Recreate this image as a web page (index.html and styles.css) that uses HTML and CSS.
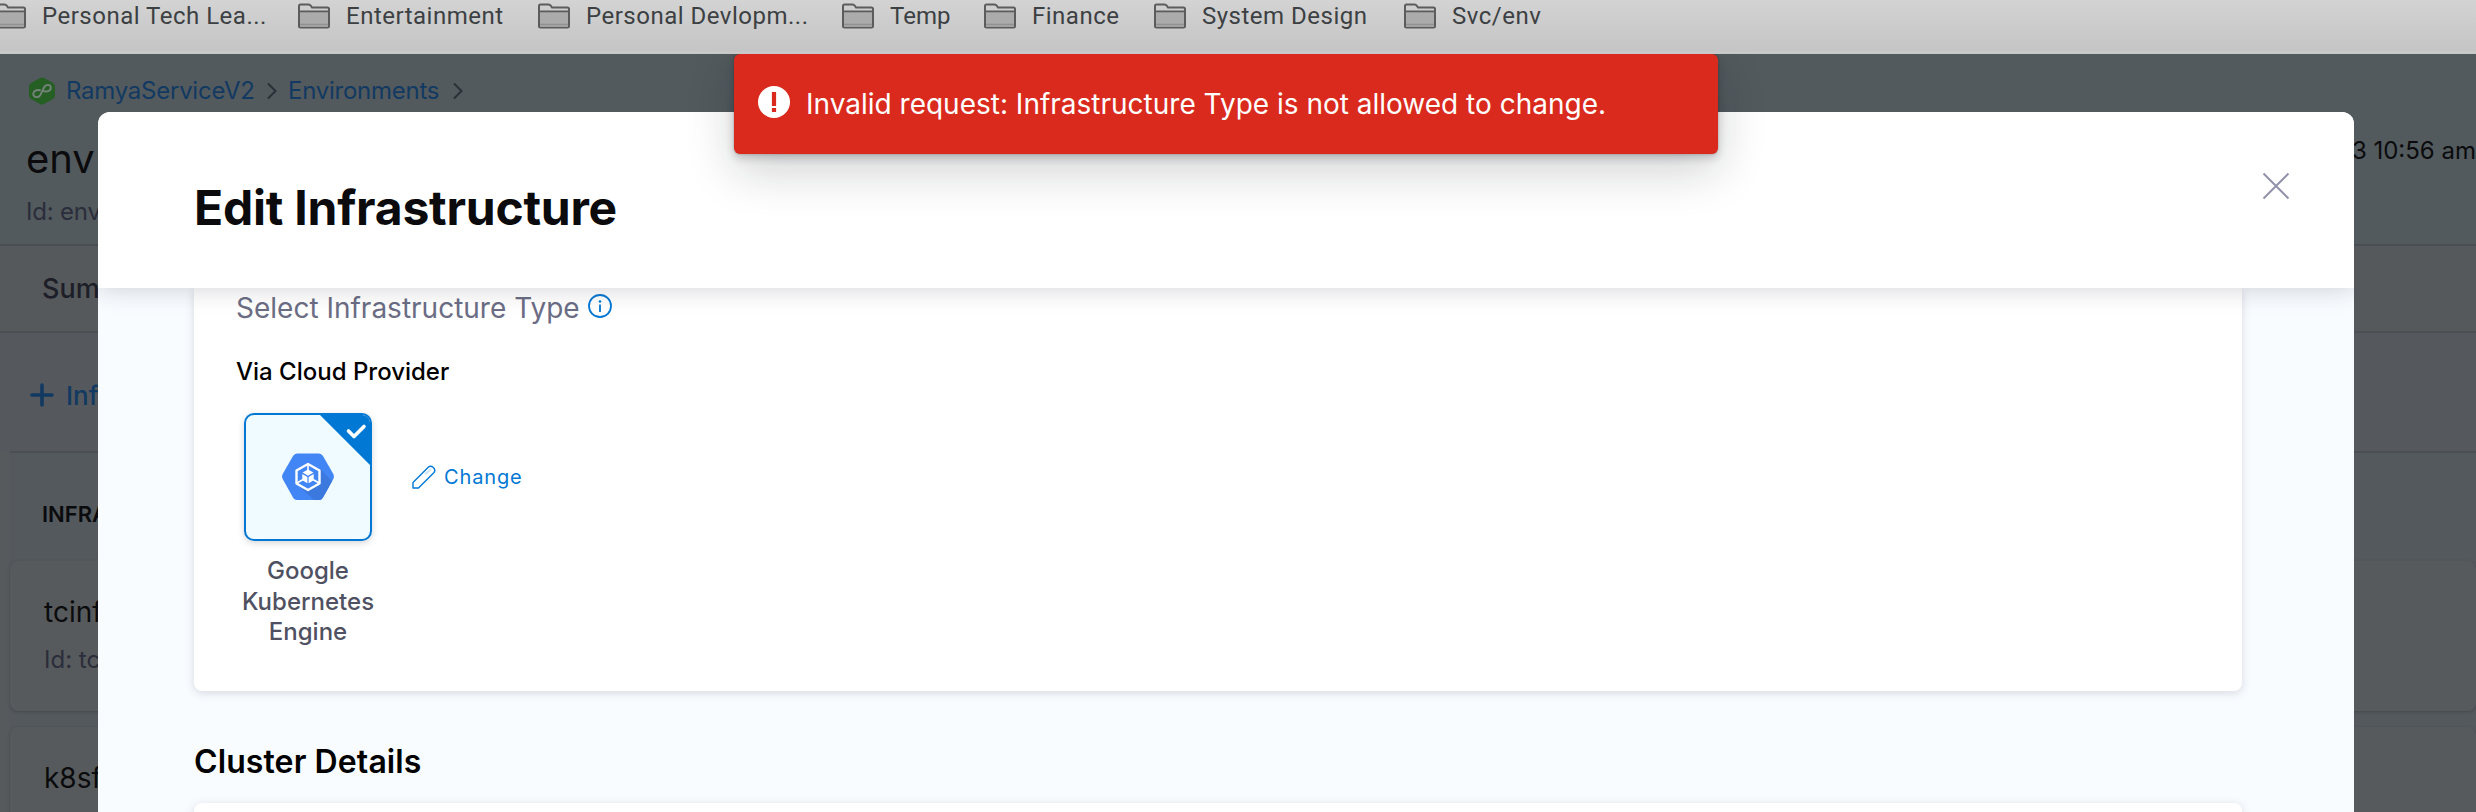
FILE: index.html
```html
<!DOCTYPE html>
<html lang="en">
<head>
<meta charset="utf-8">
<title>Edit Infrastructure</title>
<link rel="stylesheet" href="styles.css">
</head>
<body>
<svg width="0" height="0" class="defs">
  <symbol id="folder" viewBox="0 0 32 26"><path d="M1 24V3Q1 1.5 2.5 1.5H10.500Q12 1.500 13 3L14 4.500H29.500Q31 4.500 31 6V23Q31 24.500 29.500 24.500H2.500Q1 24.500 1 23Z" fill="#cecece" stroke="#5c5c5c" stroke-width="2"/><path d="M2 10H30V23.500H2Z" fill="#ababab"/><path d="M1 8.500H31" stroke="#5c5c5c" stroke-width="2"/><path d="M2 21.500H30" stroke="#929292" stroke-width="1.500"/></symbol>
  <symbol id="chev" viewBox="0 0 10 18"><path d="M1 1.500L8.500 9L1 16.500" fill="none" stroke="#2b2f38" stroke-width="2"/></symbol>
</svg>
<nav class="bookmarks">
  <a class="bm bm1"><svg><use href="#folder"/></svg><span>Personal Tech Lea...</span></a>
  <a class="bm bm2"><svg><use href="#folder"/></svg><span>Entertainment</span></a>
  <a class="bm bm3"><svg><use href="#folder"/></svg><span>Personal Devlopm...</span></a>
  <a class="bm bm4"><svg><use href="#folder"/></svg><span>Temp</span></a>
  <a class="bm bm5"><svg><use href="#folder"/></svg><span>Finance</span></a>
  <a class="bm bm6"><svg><use href="#folder"/></svg><span>System Design</span></a>
  <a class="bm bm7"><svg><use href="#folder"/></svg><span>Svc/env</span></a>
</nav>
<div class="app">
  <header class="page-head">
    <div class="crumbs">
      <svg class="hex" viewBox="0 0 26 28"><path d="M13 0.500Q14 0.500 15 1L24 6Q26 7.300 26 9V19Q26 20.700 24 22L15 27Q13 28 11 27L2 22Q0 20.700 0 19V9Q0 7.300 2 6L11 1Q12 0.500 13 0.500Z" fill="#265f24"/><path d="M11 13.200C7.500 12.600 4.300 13.800 4.300 17C4.300 20.300 8.800 21.300 11.200 18.300L15 10.500C16.800 7 21.800 6.800 21.800 10.800C21.800 14.500 17.500 15 14.500 14.200" fill="none" stroke="#74837a" stroke-width="1.900" stroke-linecap="round"/></svg>
      <a>RamyaServiceV2</a><svg class="chev"><use href="#chev"/></svg><a>Environments</a><svg class="chev"><use href="#chev"/></svg>
    </div>
    <div class="title-row"><h2>env</h2><time>3 10:56 am</time></div>
    <p class="env-id">Id: env</p>
  </header>
  <div class="tabs">Summary</div>
  <div class="toolbar"><svg viewBox="0 0 24 24"><path d="M12 2V22M2 12H22" stroke="#123961" stroke-width="3.600" stroke-linecap="round"/></svg><span>Infrastructure</span></div>
  <div class="list">
    <div class="col-head">INFRASTRUCTURE</div>
    <div class="row"><b>tcinfra</b><span>Id: tcinfra</span></div>
    <div class="row row-two"><b>k8sfra</b></div>
  </div>
</div>
<section class="modal">
  <header class="modal-head"><h1>Edit Infrastructure</h1>
    <svg viewBox="0 0 28 28"><path d="M1.500 1.500L26.500 26.500M26.500 1.500L1.500 26.500" stroke="#9293ab" stroke-width="2"/></svg></header>
  <div class="modal-body">
    <div class="card">
      <div class="select-title"><span>Select Infrastructure Type</span>
        <svg viewBox="0 0 24 24"><circle cx="12" cy="12" r="11" fill="none" stroke="#0278d5" stroke-width="1.800"/><path d="M12 10.500V18" stroke="#0278d5" stroke-width="1.800"/><circle cx="12" cy="7.500" r="1.300" fill="#0278d5"/></svg></div>
      <h4>Via Cloud Provider</h4>
      <div class="provider">
        <div class="tile">
          <svg class="gke" viewBox="0 0 52 48"><defs><clipPath id="hx"><path d="M15 .500H37Q39.500 .500 41 3L51.300 21Q52.500 23.500 51.300 26L41 44.500Q39.500 47 37 47H15Q12.500 47 11 44.500L.7 26Q-.5 23.500 .7 21L11 3Q12.500 .500 15 .500Z"/></clipPath></defs><g clip-path="url(#hx)"><path d="M0 0H52V48H0Z" fill="#4285f4"/><path d="M38 16L54 32V50H35L17 33L26 37L38 31Z" fill="#3b79de"/></g><path d="M26 11L37.500 17.500V30.500L26 37L14.500 30.500V17.500Z" fill="none" stroke="#fff" stroke-width="2.400" stroke-linejoin="round"/><path d="M26 12V18M15 30L21 26.500M37 30L31 26.500" stroke="#fff" stroke-width="1.600"/><path d="M26 16.500L31.500 19.600L26 22.700L20.500 19.600Z" fill="#fff"/><path d="M20.300 21L25.400 24V30.300L20.300 27.300ZM31.700 21L26.600 24V30.300L31.700 27.300Z" fill="#fff"/></svg>
          <svg class="corner" viewBox="0 0 50 50"><path d="M0 0H50V50Z" fill="#0278d5"/><path d="M28.500 16L34 21.500L44 11.500" fill="none" stroke="#fff" stroke-width="3.600" stroke-linecap="round" stroke-linejoin="round"/></svg>
        </div>
        <a class="change"><svg viewBox="0 0 24 24"><path d="M1 23V17.500L16.500 2Q18.500 .300 21 2.300Q24 5 22 7.500L6.500 23Z" fill="none" stroke="#0278d5" stroke-width="1.400" stroke-linejoin="round"/><path d="M12.500 8L18.500 3.500L19.500 5L14 10" fill="#cfe6f8"/></svg><span>Change</span></a>
      </div>
      <p class="tile-label">Google Kubernetes Engine</p>
    </div>
    <h3>Cluster Details</h3>
    <div class="card next-card"></div>
  </div>
</section>
<div class="toast"><svg viewBox="0 0 32 32"><circle cx="16" cy="16" r="16" fill="#fff"/><path d="M16 6V20M16 22V26" stroke="#da291d" stroke-width="4.200"/></svg><span>Invalid request: Infrastructure Type is not allowed to change.</span></div>
</body>
</html>
```
FILE: styles.css
```css
* { box-sizing: border-box; }
html { height: 812px; overflow: hidden; }
body { margin: 0; width: 2476px; height: 812px; overflow: hidden; position: relative; font-family: Inter, sans-serif; color: #0b0b0d; background: #565a5d; }
h1, h2, h3, h4, p { margin: 0; }
svg { display: block; flex: none; }
span, a, b, time { white-space: nowrap; }
.defs { position: absolute; }

.bookmarks { height: 54px; display: flex; background: linear-gradient(#d3d3d3, #c5c5c5 50px, #cacaca); font: 24px/32px Roboto, sans-serif; letter-spacing: .5px; color: #3c4043; overflow: hidden; border-bottom: 1px solid #c8c8c8; }
.bm { display: flex; gap: 16px; flex: none; }
.bm svg { width: 32px; height: 26px; margin-top: 3px; }
.bm1 { margin-left: -6px; width: 304px; }
.bm2 { width: 240px; }
.bm3 { width: 304px; }
.bm4 { width: 142px; letter-spacing: 0; }
.bm5 { width: 170px; }
.bm6 { width: 250px; }

.app { height: 758px; overflow: hidden; }
.page-head { height: 192px; background: #525a5e; border-bottom: 2px solid #484e54; padding: 21px 0 0 26px; }
.crumbs { display: flex; align-items: center; height: 32px; font-size: 24px; letter-spacing: -.25px; color: #123961; }
.crumbs a { position: relative; top: -1px; }
.crumbs a:nth-of-type(1) { width: 189px; }
.crumbs a:nth-of-type(2) { width: 153px; }
.hex { width: 26px; height: 28px; margin: 0 11px 0 3px; }
.chev { width: 10px; height: 18px; margin: 0 11px 0 12px; }
.title-row { display: flex; justify-content: space-between; margin-top: 26px; height: 52px; }
h2 { font: 400 40px/52px Inter, sans-serif; }
time { font-size: 24px; line-height: 36px; }
.env-id { font-size: 24px; line-height: 28px; margin-top: 13px; letter-spacing: -.2px; color: #2b2d3b; }
.tabs { height: 87px; border-bottom: 2px solid #4c5054; padding: 26px 42px; font-size: 27px; line-height: 34px; font-weight: 500; color: #1d1e27; background: #56595c; }
.toolbar { height: 118px; display: flex; align-items: center; gap: 12px; padding: 6px 0 0 30px; font-size: 26px; font-weight: 500; color: #123961; background: #55595d; }
.toolbar svg { width: 24px; height: 24px; }
.list { margin-left: 10px; border-top: 2px solid #4b4f53; background: #53595d; }
.col-head { height: 108px; padding: 47px 32px; font-size: 22px; line-height: 28px; font-weight: 600; }
.row { height: 150px; border-radius: 8px; padding: 33px 34px; background: #565a5c; box-shadow: 0 1px 3px #44484b; display: flex; flex-direction: column; gap: 18px; }
.row b { font-size: 28px; line-height: 36px; font-weight: 400; }
.row span { font-size: 24px; line-height: 24px; color: #2b2d3b; }
.row-two { margin-top: 16px; }

.modal { position: absolute; left: 98px; top: 112px; width: 2256px; height: 700px; display: flex; flex-direction: column; border-radius: 12px 12px 0 0; background: #f8fcff; overflow: hidden; isolation: isolate; }
.modal-head { height: 176px; flex: none; display: flex; justify-content: space-between; padding: 60px 64px 0 96px; background: #fff; box-shadow: 0 0 24px rgba(40, 41, 61, .22); z-index: 1; }
h1 { font-size: 48px; line-height: 72px; font-weight: 700; letter-spacing: -.22px; }
.modal-head svg { width: 28px; height: 28px; }
.modal-body { padding: 0 112px 0 96px; flex: 1; }
.card { height: 403px; padding: 0 42px; background: #fff; border-radius: 0 0 8px 8px; box-shadow: 0 2px 8px rgba(96, 97, 112, .22); }
.select-title { display: flex; gap: 8px; font-size: 28px; line-height: 40px; color: #6b6d85; }
.select-title svg { width: 24px; height: 24px; margin-top: 6px; }
h4 { font-size: 24px; line-height: 32px; font-weight: 500; margin-top: 28px; color: #000; }
.provider { display: flex; align-items: center; gap: 40px; margin: 25px 0 0 8px; }
.tile { width: 128px; height: 128px; position: relative; border: 2px solid #0278d5; border-radius: 10px; background: #effbff; display: grid; place-items: center; overflow: hidden; box-shadow: 0 2px 6px rgba(96, 97, 112, .25); }
.gke { width: 52px; height: 48px; }
.corner { position: absolute; right: 0; top: 0; width: 50px; height: 50px; }
.change { display: flex; align-items: center; gap: 8px; color: #0278d5; font-size: 20px; letter-spacing: .85px; }
.change svg { width: 24px; height: 24px; }
.tile-label { width: 144px; margin-top: 15px; text-align: center; font-size: 24px; line-height: 30.500px; font-weight: 500; color: #4f5162; }
h3 { margin-top: 51px; font-size: 32px; line-height: 40px; font-weight: 600; letter-spacing: .1px; color: #000; }
.next-card { margin-top: 21px; border-radius: 8px; height: 80px; }

.toast { position: absolute; z-index: 2; left: 734px; top: 54px; width: 984px; height: 100px; display: flex; align-items: center; gap: 16px; padding-left: 24px; color: #fff; background: #da291d; border-radius: 6px; font-size: 28px; box-shadow: 0 0 2px rgba(16, 22, 26, .3), 0 4px 8px rgba(16, 22, 26, .2), 0 16px 48px rgba(16, 22, 26, .2); clip-path: inset(0 -100px -100px -100px); }
.toast svg { width: 32px; height: 32px; margin-bottom: 4px; }
```
